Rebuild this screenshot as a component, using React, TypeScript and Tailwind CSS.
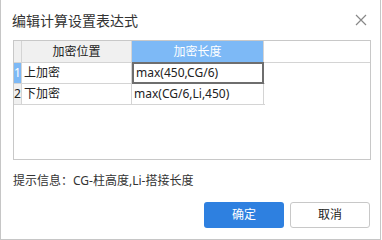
import React from "react";

const rows = [
  { pos: "上加密", expr: "max(450,CG/6)" },
  { pos: "下加密", expr: "max(CG/6,Li,450)" },
];

export default function App() {
  return (
    <div
      className="w-[381px] h-[240px] bg-white border-l border-r border-b border-[#c6c6c6] flex flex-col text-[#222]"
      style={{ fontFamily: '"Noto Sans", "Noto Sans CJK SC", sans-serif' }}
    >
      {/* Title bar */}
      <div className="h-[40px] flex items-center justify-between pl-[11px] pr-[13px]">
        <span className="text-[14px] text-[#333]">编辑计算设置表达式</span>
        <svg width="12" height="12" viewBox="0 0 12 12" className="text-[#888]">
          <path d="M1 1L11 11M11 1L1 11" stroke="currentColor" strokeWidth="1.2" />
        </svg>
      </div>

      {/* Grid */}
      <div className="ml-[12px] w-[358px] h-[120px] border border-[#c8c8c8] bg-white text-[12px]">
        <div className="flex h-[22px] border-b border-[#d4d4d4]">
          <div className="w-[8px] bg-[#f0f0f0] border-r border-[#d4d4d4]" />
          <div className="w-[110px] bg-[#f0f0f0] border-r border-[#d4d4d4] flex items-center justify-center">
            加密位置
          </div>
          <div className="w-[132px] bg-[#7db9f6] border-r border-[#d4d4d4] text-white flex items-center justify-center">
            加密长度
          </div>
        </div>
        {rows.map((r, i) => (
          <div key={i} className="flex h-[21px] border-b border-[#d4d4d4] w-[251px]">
            <div
              className={`w-[8px] border-r border-[#d4d4d4] flex items-center justify-center leading-none ${
                i === 0 ? "bg-[#7db9f6] text-white" : "bg-[#f0f0f0]"
              }`}
            >
              {i + 1}
            </div>
            <div className="w-[110px] border-r border-[#d4d4d4] flex items-center pl-[2px]">{r.pos}</div>
            <div
              className={`w-[132px] flex items-center pl-[2px] ${
                i === 0 ? "border-2 border-[#6e6e6e] -mt-[1px] h-[22px]" : "border-r border-[#d4d4d4]"
              }`}
            >
              {r.expr}
            </div>
          </div>
        ))}
      </div>

      {/* Hint */}
      <div className="mt-[13px] pl-[12px] text-[12px] leading-[16px] text-[#333]">
        提示信息：CG-柱高度,Li-搭接长度
      </div>

      {/* Buttons */}
      <div className="mt-[13px] flex justify-end gap-[6px] pr-[10px]">
        <button className="w-[80px] h-[26px] rounded-[3px] bg-[#2e80e0] text-white text-[12px]">确定</button>
        <button className="w-[80px] h-[26px] rounded-[3px] border border-[#c8c8c8] bg-white text-[12px] text-[#222]">
          取消
        </button>
      </div>
    </div>
  );
}
